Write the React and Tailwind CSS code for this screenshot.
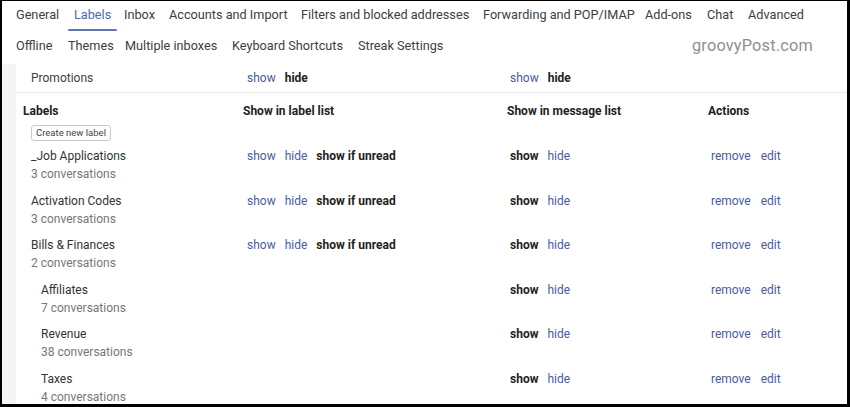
import React from "react";

const font = { fontFamily: "Roboto, 'Noto Sans', Arial, sans-serif" };

const row1 = [
  ["General", "w-[58px]"],
  ["Labels", "w-[50px]"],
  ["Inbox", "w-[45px]"],
  ["Accounts and Import", "w-[132px]"],
  ["Filters and blocked addresses", "w-[182px]"],
  ["Forwarding and POP/IMAP", "w-[162px]"],
  ["Add-ons", "w-[62px]"],
  ["Chat", "w-[41px]"],
  ["Advanced", "w-[80px]"],
];
const row2 = [
  ["Offline", "w-[52px]"],
  ["Themes", "w-[57px]"],
  ["Multiple inboxes", "w-[107px]"],
  ["Keyboard Shortcuts", "w-[126px]"],
  ["Streak Settings", "w-[120px]"],
];

const labels = [
  { name: "_Job Applications", count: "3 conversations", sub: false, list: true },
  { name: "Activation Codes", count: "3 conversations", sub: false, list: true },
  { name: "Bills & Finances", count: "2 conversations", sub: false, list: true },
  { name: "Affiliates", count: "7 conversations", sub: true, list: false },
  { name: "Revenue", count: "38 conversations", sub: true, list: false },
  { name: "Taxes", count: "4 conversations", sub: true, list: false },
];

const link = "text-[#4a5ba0]";
const bold = "font-bold text-[#222]";

export default function App() {
  return (
    <div
      className="w-[850px] h-[407px] overflow-hidden bg-white border-l-2 border-t border-r-[3px] border-b-[3px] border-black box-border flex flex-col"
      style={font}
    >
      {/* Tabs */}
      <div className="flex items-center h-[27px] pl-[14px] text-[12.7px] text-[#3c4043]">
        {row1.map(([t, w]) => (
          <div key={t} className={`${w} shrink-0 relative h-full flex items-center`}>
            <span className={t === "Labels" ? "text-[#4d6aa6]" : ""}>{t}</span>
            {t === "Labels" && (
              <div className="absolute left-[-6px] w-[49px] bottom-[-3px] h-[2px] bg-[#5c78ad] rounded-full" />
            )}
          </div>
        ))}
      </div>
      <div className="flex items-center h-[36px] pl-[14px] text-[12.7px] text-[#3c4043]">
        {row2.map(([t, w]) => (
          <div key={t} className={`${w} shrink-0`}>{t}</div>
        ))}
        <div className="ml-[214px] text-[16.3px] text-[#8f8f8f] tracking-[0.2px]">groovyPost.com</div>
      </div>

      {/* Content */}
      <div className="flex flex-1 min-h-0">
        <div className="w-[14px] shrink-0 bg-[#f5f5f7]" />
        <div className="flex-1 min-w-0 text-[12px] text-[#3c4043]">
          {/* Promotions */}
          <div className="grid grid-cols-[227px_264px_201px_1fr] items-center h-[29px] border-b border-[#e8e8ea]">
            <div className="pl-[15px]">Promotions</div>
            <div className="pl-[4px] flex gap-[9px]">
              <span className={link}>show</span>
              <span className={bold}>hide</span>
            </div>
            <div className="pl-[3px] flex gap-[9px]">
              <span className={link}>show</span>
              <span className={bold}>hide</span>
            </div>
            <div />
          </div>

          {/* Header */}
          <div className="grid grid-cols-[227px_264px_201px_1fr] pt-[9px] leading-[18px] font-bold text-[#222]">
            <div className="pl-[7px]">Labels</div>
            <div>Show in label list</div>
            <div>Show in message list</div>
            <div>Actions</div>
          </div>
          <div className="pl-[15px] mt-[3px]">
            <button className="h-[16px] px-[4px] text-[9.5px] leading-[14px] text-[#444] bg-white border border-[#c8c8c8] rounded-[3px]">
              Create new label
            </button>
          </div>

          <div className="mt-[6px] flex flex-col">
            {labels.map((l) => (
              <div key={l.name} className="grid grid-cols-[227px_264px_201px_1fr] h-[44.5px] leading-[18px]">
                <div className={l.sub ? "pl-[25px]" : "pl-[15px]"}>
                  <div className="text-[#333]">{l.name}</div>
                  <div className="text-[#777]">{l.count}</div>
                </div>
                <div className="pl-[4px]">
                  {l.list && (
                    <div className="flex gap-[9px]">
                      <span className={link}>show</span>
                      <span className={link}>hide</span>
                      <span className={bold}>show if unread</span>
                    </div>
                  )}
                </div>
                <div className="pl-[3px] flex gap-[9px] items-start">
                  <span className={bold}>show</span>
                  <span className={link}>hide</span>
                </div>
                <div className="pl-[3px] flex gap-[10px] items-start">
                  <span className={link}>remove</span>
                  <span className={link}>edit</span>
                </div>
              </div>
            ))}
          </div>
        </div>
      </div>
    </div>
  );
}
